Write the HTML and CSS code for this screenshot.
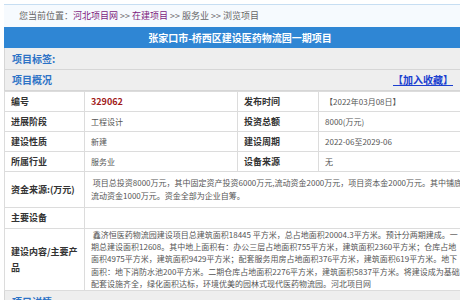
FILE: index.html
```html
<!DOCTYPE html>
<html lang="zh-CN">
<head>
<meta charset="utf-8">
<title>张家口市-桥西区建设医药物流园一期项目</title>
<link rel="stylesheet" href="styles.css">
</head>
<body>
<div class="page">
  <div class="crumb">您当前位置：<a class="crumb-link" href="#">河北项目网</a> &gt;&gt; <a class="crumb-link" href="#">在建项目</a> &gt;&gt; 服务业 &gt;&gt; 浏览项目</div>
  <h1 class="title">张家口市-桥西区建设医药物流园一期项目</h1>
  <div class="bar">项目标签:</div>
  <div class="bar bar-split"><span>项目概况</span><a class="fav" href="#">【加入收藏】</a></div>
  <table class="info">
    <colgroup><col class="c-l1"><col class="c-v1"><col class="c-l2"><col class="c-v2"></colgroup>
    <tr><th>编号</th><td class="code">329062</td><th>发布时间</th><td>【2022年03月08日】</td></tr>
    <tr><th>进展阶段</th><td>工程设计</td><th>投资总额</th><td>8000(万元)</td></tr>
    <tr><th>建设性质</th><td>新建</td><th>建设周期</th><td>2022-06至2029-06</td></tr>
    <tr><th>所属行业</th><td>服务业</td><th>设备来源</th><td>无</td></tr>
    <tr class="tall"><th>资金来源:(万元)</th><td colspan="3" class="para">&nbsp;项目总投资8000万元，其中固定资产投资6000万元,流动资金2000万元，项目资本金2000万元。其中铺底<br>流动资金1000万元。资金全部为企业自筹。</td></tr>
    <tr class="mid"><th>主要设备</th><td colspan="3"></td></tr>
    <tr class="long"><th>建设内容/主要产品</th><td colspan="3" class="para">&nbsp;鑫济恒医药物流园建设项目总建筑面积18445 平方米，总占地面积20004.3平方米。预计分两期建成。一<br>期总建设面积12608。其中地上面积有：办公三层占地面积755平方米，建筑面积2360平方米；仓库占地<br>面积4975平方米，建筑面积9429平方米；配套服务用房占地面积376平方米，建筑面积619平方米。地下<br>面积：地下消防水池200平方米。二期仓库占地面积2276平方米，建筑面积5837平方米。将建设成为基础<br>配套设施齐全，绿化面积达标，环境优美的园林式现代医药物流园。河北项目网</td></tr>
  </table>
  <div class="bar">项目详情</div>
</div>
</body>
</html>
```
FILE: styles.css
```css
html, body {
  margin: 0;
  padding: 0;
  background: #ffffff;
}
body {
  font-family: "Noto Sans CJK SC", "Noto Sans", sans-serif;
  color: #555555;
  overflow: hidden;
}
.page {
  width: 472px;
  margin: 4px 0 0 4px;
}
.crumb {
  height: 22px;
  line-height: 22px;
  border-top: 1px solid #c7def2;
  background: #f6fafe;
  padding-left: 15px;
  font-size: 9px;
  color: #666666;
  white-space: nowrap;
}
.crumb-link {
  color: #7d1a7d;
  text-decoration: none;
}
.title {
  margin: 0;
  height: 21px;
  line-height: 21px;
  background: #2f86d4;
  color: #ffffff;
  font-size: 10px;
  font-weight: bold;
  text-align: center;
}
.bar {
  height: 21px;
  line-height: 21px;
  background: #eeeeee;
  border-left: 1px solid #d6d6d6;
  border-bottom: 1px solid #d6d6d6;
  padding-left: 7px;
  font-size: 10px;
  font-weight: bold;
  color: #2c72c6;
}
.bar-split {
  height: 20px;
  line-height: 20px;
  display: flex;
  justify-content: space-between;
}
.fav {
  color: #1b3fd0;
  text-decoration: underline;
  margin-right: 23px;
}
.info {
  width: 472px;
  border-collapse: collapse;
  table-layout: fixed;
}
.c-l1 { width: 80px; }
.c-v1 { width: 153px; }
.c-l2 { width: 81px; }
.c-v2 { width: 158px; }
.info th, .info td {
  border: 1px solid #dcdcdc;
  height: 19px;
  padding: 0 6px;
  text-align: left;
  vertical-align: middle;
}
.info th {
  font-size: 9px;
  font-weight: bold;
  color: #333333;
  line-height: 16px;
}
.info td {
  font-size: 8px;
  color: #555555;
}
.info .code {
  color: #a01818;
  font-weight: bold;
  font-size: 9px;
}
.info .para {
  line-height: 12.2px;
  white-space: nowrap;
  padding-top: 0;
  padding-bottom: 0;
}
.tall th, .tall td {
  height: 35px;
}
.mid th, .mid td {
  height: 20px;
}
.long th, .long td {
  height: 61px;
}
```
